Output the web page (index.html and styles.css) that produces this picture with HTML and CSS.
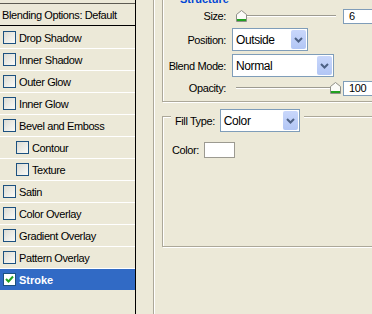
FILE: index.html
```html
<!DOCTYPE html>
<html lang="en">
<head>
    <meta charset="UTF-8">
    <meta name="viewport" content="width=device-width, initial-scale=1.0">
    <title>Layer Style - Stroke</title>
    <link rel="stylesheet" href="styles.css">
</head>
<body>

<div class="dialog">
    <div class="styles-list">
        <div class="list-header">Blending Options: Default</div>
        <div class="list-body">
            <div class="layer"><span class="check"></span>Drop Shadow</div>
            <div class="layer"><span class="check"></span>Inner Shadow</div>
            <div class="layer"><span class="check"></span>Outer Glow</div>
            <div class="layer"><span class="check"></span>Inner Glow</div>
            <div class="layer"><span class="check"></span>Bevel and Emboss</div>
            <div class="layer sub"><span class="check"></span>Contour</div>
            <div class="layer sub"><span class="check"></span>Texture</div>
            <div class="layer"><span class="check"></span>Satin</div>
            <div class="layer"><span class="check"></span>Color Overlay</div>
            <div class="layer"><span class="check"></span>Gradient Overlay</div>
            <div class="layer"><span class="check"></span>Pattern Overlay</div>
            <div class="layer active">
                <span class="check">
                    <svg width="11" height="11" viewBox="0 0 11 11"><path d="M2 5 L4.5 7.5 L9 2.5" fill="none" stroke="#21a121" stroke-width="2"/></svg>
                </span>Stroke
            </div>
        </div>
    </div>

    <div class="gutter"></div>

    <div class="settings">
        <div class="group structure">
            <div class="legend title">Structure</div>

            <div class="row row-short">
                <label class="label">Size:</label>
                <div class="slider">
                    <svg class="thumb" style="margin-left: 0" width="11" height="12" viewBox="0 0 11 12"><path d="M0.5 11.5 V4.5 L5.5 0.5 L10.5 4.5 V11.5 Z" fill="#fbfbf8" stroke="#8f8f88"/><rect x="1" y="9" width="9" height="2" fill="#21a121"/></svg>
                </div>
                <div class="field">6</div>
            </div>

            <div class="row">
                <label class="label">Position:</label>
                <div class="select select-position">
                    <span class="value">Outside</span>
                    <span class="arrow"><svg width="9" height="6" viewBox="0 0 9 6"><path d="M1 1 L4.5 4.5 L8 1" fill="none" stroke="#4d6185" stroke-width="2"/></svg></span>
                </div>
            </div>

            <div class="row">
                <label class="label">Blend Mode:</label>
                <div class="select select-blend">
                    <span class="value">Normal</span>
                    <span class="arrow"><svg width="9" height="6" viewBox="0 0 9 6"><path d="M1 1 L4.5 4.5 L8 1" fill="none" stroke="#4d6185" stroke-width="2"/></svg></span>
                </div>
            </div>

            <div class="row row-short">
                <label class="label">Opacity:</label>
                <div class="slider">
                    <svg class="thumb" style="margin-left: 94px" width="11" height="12" viewBox="0 0 11 12"><path d="M0.5 11.5 V4.5 L5.5 0.5 L10.5 4.5 V11.5 Z" fill="#fbfbf8" stroke="#8f8f88"/><rect x="1" y="9" width="9" height="2" fill="#21a121"/></svg>
                </div>
                <div class="field">100</div>
            </div>
        </div>

        <div class="group fill">
            <div class="legend">
                <label class="legend-label">Fill Type:</label>
                <div class="select select-fill">
                    <span class="value">Color</span>
                    <span class="arrow"><svg width="9" height="6" viewBox="0 0 9 6"><path d="M1 1 L4.5 4.5 L8 1" fill="none" stroke="#4d6185" stroke-width="2"/></svg></span>
                </div>
            </div>
            <div class="color-row">
                <label>Color:</label>
                <div class="swatch"></div>
            </div>
        </div>
    </div>
</div>

</body>
</html>
```

FILE: styles.css
```css
body {
    margin: 0;
    font-family: 'Liberation Sans', Arial, sans-serif;
    font-size: 11px;
    letter-spacing: -0.4px;
    color: #000;
    background-color: #ece9d8;
    overflow: hidden;
}

.dialog {
    display: flex;
    width: 372px;
    height: 314px;
    overflow: hidden;
}

/* left list of effects */
.styles-list {
    width: 135px;
    flex-shrink: 0;
    border-right: 1px solid #000;
    padding-top: 3px;
}

.list-header {
    height: 21px;
    line-height: 22px;
    padding-left: 2px;
    border-top: 1px solid #5d5b52;
    border-bottom: 1px solid #000;
}

.list-body {
    padding-top: 1px;
}

.layer {
    display: flex;
    align-items: center;
    gap: 3px;
    height: 21px;
    padding-left: 3px;
    border-bottom: 1px solid #fff;
}

.layer.sub {
    padding-left: 16px;
}

.layer.active {
    background-color: #316ac5;
    color: #fff;
    font-weight: bold;
    letter-spacing: 0;
    border-bottom-color: #ece9d8;
}

.check {
    width: 11px;
    height: 11px;
    border: 1px solid #1c5180;
    background: linear-gradient(135deg, #dcdcd4, #fafaf7);
    display: flex;
}

.active .check {
    background: #fff;
}

/* thin separator between list and settings */
.gutter {
    width: 17px;
    flex-shrink: 0;
    border-right: 1px solid #aca899;
    box-shadow: 1px 0 0 #fff;
}

.settings {
    flex: 1;
    overflow: hidden;
    padding-left: 8px;
    margin-top: -2px;
}

.group {
    width: 260px;
    border: 1px solid #aca899;
    box-shadow: inset 1px 1px 0 #fff, 1px 1px 0 #fff;
}

.legend {
    display: flex;
    align-items: center;
    width: fit-content;
    background-color: #ece9d8;
}

.legend.title {
    height: 13px;
    margin-top: -7px;
    margin-left: 14px;
    padding: 0 3px;
    color: #0046d5;
    font-weight: bold;
    letter-spacing: 0;
}

.structure {
    padding-bottom: 5px;
}

.row {
    display: flex;
    align-items: center;
    height: 23px;
    margin-top: 3px;
}

.row-short {
    height: 16px;
}

.structure .row:nth-child(3) {
    margin-top: 4px;
}

.label {
    width: 63px;
    text-align: right;
    margin-right: 6px;
}

.slider {
    width: 100px;
    height: 12px;
    margin-left: 4px;
    display: flex;
    align-items: flex-end;
    background: linear-gradient(#ece9d8 5px, #9d9b91 5px, #9d9b91 6px, #fff 6px, #fff 7px, transparent 7px);
}

.thumb {
    display: block;
    flex-shrink: 0;
}

.field {
    margin-left: 7px;
    width: 40px;
    height: 13px;
    line-height: 13px;
    padding-left: 5px;
    border: 1px solid #7f9db9;
    background-color: #fff;
}

.select {
    display: flex;
    align-items: center;
    justify-content: space-between;
    height: 21px;
    border: 1px solid #7f9db9;
    background-color: #fff;
    padding-left: 3px;
}

.select-position {
    width: 71px;
}

.select-blend {
    width: 97px;
}

.select-fill {
    width: 75px;
}

.value {
    font-size: 12px;
}

.arrow {
    width: 15px;
    height: 19px;
    margin-right: 1px;
    border-radius: 2px;
    background: linear-gradient(#c9d7fb, #b2c6f5);
    display: flex;
    align-items: center;
    justify-content: center;
}

.fill {
    margin-top: 14px;
    height: 129px;
}

.fill .legend {
    margin-top: -8px;
    margin-left: 8px;
    padding: 0 4px;
    gap: 5px;
}

.color-row {
    display: flex;
    align-items: center;
    gap: 5px;
    margin-top: 10px;
    padding-left: 9px;
}

.swatch {
    width: 29px;
    height: 14px;
    border: 1px solid #9c9a91;
    background-color: #fff;
}
```
